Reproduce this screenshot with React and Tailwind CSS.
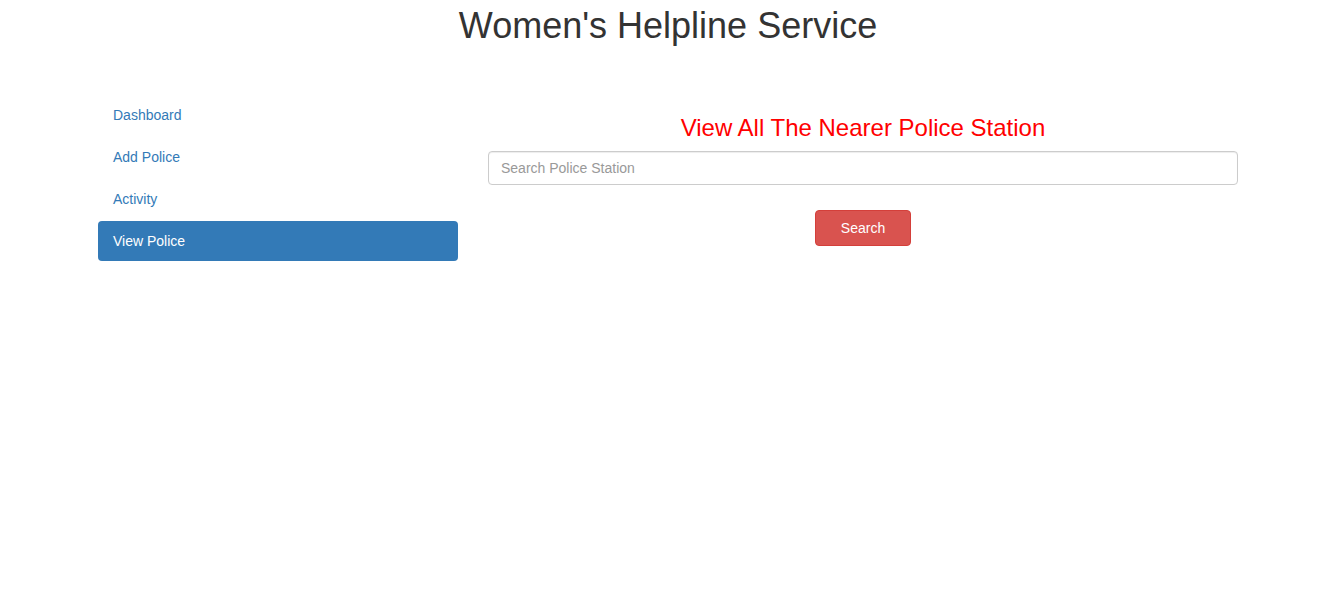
import React from 'react';

const links = ['Dashboard', 'Add Police', 'Activity', 'View Police'];

export default function App() {
  return (
    <div className="min-h-screen bg-white text-[#333] text-[14px] leading-[20px]" style={{ fontFamily: '"Liberation Sans", Arial, sans-serif' }}>
      <h1 className="w-[1336px] pt-[6px] text-center text-[36px] leading-[39.6px] font-normal text-[#333]">
        Women's Helpline Service
      </h1>

      <div className="pl-[98px] pt-[49px] flex gap-[30px] w-[1268px]">
        <ul className="w-[360px] flex flex-col gap-[2px]">
          {links.map((l) => (
            <li key={l}>
              <a
                href="#"
                className={
                  l === 'View Police'
                    ? 'block px-[15px] py-[10px] rounded-[4px] bg-[#337ab7] text-white'
                    : 'block px-[15px] py-[10px] rounded-[4px] text-[#337ab7]'
                }
              >
                {l}
              </a>
            </li>
          ))}
        </ul>

        <div className="w-[750px] pt-[20px]">
          <h3 className="text-center text-[24px] leading-[26.4px] text-[#ff0000] mb-[10px]">
            View All The Nearer Police Station
          </h3>
          <input
            type="text"
            placeholder="Search Police Station"
            className="block w-full h-[34px] px-[12px] py-[6px] border border-[#ccc] rounded-[4px] text-[14px] placeholder:text-[#999] outline-none shadow-[inset_0_1px_1px_rgba(0,0,0,0.075)]"
          />
          <div className="flex justify-center mt-[25px]">
            <button className="w-[96px] h-[36px] rounded-[4px] bg-[#d9534f] border border-[#d43f3a] text-white text-[14px]">
              Search
            </button>
          </div>
        </div>
      </div>
    </div>
  );
}
